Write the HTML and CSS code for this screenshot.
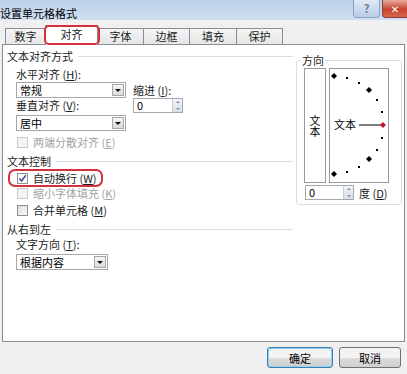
FILE: index.html
```html
<!DOCTYPE html>
<html lang="zh-CN">
<head>
    <meta charset="UTF-8">
    <title>设置单元格格式</title>
    <link rel="stylesheet" href="styles.css">
</head>
<body>
    <div class="titlebar">
        <span class="title">设置单元格格式</span>
        <div class="title-buttons">
            <span class="btn-help">?</span>
            <span class="btn-close">&#x2715;</span>
        </div>
    </div>

    <div class="tabs">
        <span class="tab w41">数字</span>
        <span class="tab tab-active w53">对齐</span>
        <span class="tab w47">字体</span>
        <span class="tab w47">边框</span>
        <span class="tab w48">填充</span>
        <span class="tab w47">保护</span>
    </div>

    <div class="panel">
        <div class="left-col">
            <div class="group-head">文本对齐方式</div>
            <div class="label">水平对齐 (<u>H</u>):</div>
            <div class="align-row">
                <div class="align-left">
                    <div class="combo"><span class="combo-text">常规</span><span class="combo-btn"></span></div>
                    <div class="label-inner">垂直对齐 (<u>V</u>):</div>
                    <div class="combo combo-gap"><span class="combo-text">居中</span><span class="combo-btn"></span></div>
                </div>
                <div class="align-right">
                    <div class="label-indent">缩进 (<u>I</u>):</div>
                    <div class="spin spin-indent"><span class="spin-text">0</span><span class="spin-btn"><i class="up"></i><i class="down"></i></span></div>
                </div>
            </div>
            <div class="check disabled mt4"><span class="box"></span>两端分散对齐 (<u>E</u>)</div>

            <div class="group-head mt5">文本控制</div>
            <div class="check mt3 marked">
                <span class="box checked">
                    <svg width="9" height="9" viewBox="0 0 9 9"><path d="M1.5 4.5 L3.6 7 L7.8 1.2" fill="none" stroke="#3d4f8a" stroke-width="1.6"/></svg>
                </span>自动换行 (<u>W</u>)
            </div>
            <div class="check disabled mt1"><span class="box"></span>缩小字体填充 (<u>K</u>)</div>
            <div class="check mt3"><span class="box"></span>合并单元格 (<u>M</u>)</div>

            <div class="group-head mt5">从右到左</div>
            <div class="label mt1">文字方向 (<u>T</u>):</div>
            <div class="combo combo-dir"><span class="combo-text">根据内容</span><span class="combo-btn"></span></div>
        </div>

        <fieldset class="orient">
            <legend>方向</legend>
            <div class="orient-row">
                <div class="vtext"><span class="vtext-inner">文本</span></div>
                <div class="dial">
                    <svg width="58" height="113" viewBox="0 0 58 113">
                        <g fill="#000">
                            <polygon points="4,4 7,7 4,10 1,7"/>
                            <rect x="16" y="8" width="2" height="2"/>
                            <rect x="28" y="13" width="2" height="2"/>
                            <polygon points="39,18 42,21 39,24 36,21"/>
                            <rect x="46" y="30" width="2" height="2"/>
                            <rect x="51" y="42" width="2" height="2"/>
                            <rect x="51" y="68" width="2" height="2"/>
                            <rect x="46" y="80" width="2" height="2"/>
                            <polygon points="39,87 42,90 39,93 36,90"/>
                            <rect x="28" y="97" width="2" height="2"/>
                            <rect x="16" y="102" width="2" height="2"/>
                            <polygon points="4,102 7,105 4,108 1,105"/>
                        </g>
                        <line x1="29" y1="56" x2="51" y2="56" stroke="#7f7f7f" stroke-width="2"/>
                        <polygon points="53,53 56,56 53,59 50,56" fill="#c0162b"/>
                        <text x="4" y="60" class="dial-text">文本</text>
                    </svg>
                </div>
            </div>
            <div class="degree-row">
                <div class="spin spin-degree"><span class="spin-text">0</span><span class="spin-btn"><i class="up"></i><i class="down"></i></span></div>
                <span class="degree-label">度 (<u>D</u>)</span>
            </div>
        </fieldset>
    </div>

    <div class="footer">
        <button class="dlg-btn btn-ok">确定</button>
        <button class="dlg-btn btn-cancel">取消</button>
    </div>
</body>
</html>
```

FILE: styles.css
```css
body {
    margin: 0;
    width: 407px;
    height: 374px;
    overflow: hidden;
    background: #f0f0f0;
    font-family: "Noto Sans CJK SC", "DejaVu Sans", sans-serif;
    font-size: 11px;
    line-height: 14px;
    color: #1b1b1b;
}

u {
    text-decoration: underline;
}

/* title bar */
.titlebar {
    height: 20px;
    display: flex;
    background: linear-gradient(#bcd1ea, #cfdff1);
}

.title {
    margin-top: 6px;
    margin-left: 0;
    color: #000;
}

.title-buttons {
    margin-left: auto;
    display: flex;
}

.btn-help {
    width: 27px;
    height: 18px;
    box-sizing: border-box;
    margin-right: 2px;
    border: 1px solid #8aa3c4;
    border-top: none;
    border-radius: 0 0 4px 4px;
    background: linear-gradient(#dfe9f5, #b9cde6);
    color: #6b7b8f;
    font-weight: bold;
    text-align: center;
    line-height: 16px;
}

.btn-close {
    width: 25px;
    height: 18px;
    box-sizing: border-box;
    border: 1px solid #8c3b35;
    border-top: none;
    border-right: none;
    border-radius: 0 0 0 4px;
    background: linear-gradient(#e9a99b, #c7432e 55%, #d7664f);
    color: #fff;
    font-size: 10px;
    font-weight: bold;
    text-align: center;
    line-height: 17px;
}

/* tabs */
.tabs {
    height: 24px;
    display: flex;
    align-items: flex-end;
    padding-left: 5px;
    box-sizing: border-box;
}

.tab {
    height: 16px;
    box-sizing: border-box;
    margin-right: -1px;
    border: 1px solid #898c95;
    border-bottom: none;
    background: linear-gradient(#f5f5f5, #e6e6e6);
    text-align: center;
    line-height: 15px;
}

.tab-active {
    position: relative;
    z-index: 2;
    height: 20px;
    margin-bottom: -1px;
    background: #fff;
    line-height: 17px;
}

.tab-active::after {
    content: "";
    position: absolute;
    left: -2px;
    right: -3px;
    top: -1px;
    bottom: 0;
    border: 2px solid #d6313a;
    border-radius: 5px;
}

.w41 { width: 41px; }
.w47 { width: 47px; }
.w48 { width: 48px; }
.w53 { width: 53px; }

/* main panel */
.panel {
    margin-left: 2px;
    width: 403px;
    height: 298px;
    box-sizing: border-box;
    border: 1px solid #898c95;
    background: #fff;
    display: flex;
    align-items: flex-start;
}

.left-col {
    width: 290px;
    padding-left: 4px;
    padding-top: 4px;
    box-sizing: border-box;
}

.group-head {
    display: flex;
    align-items: center;
}

.group-head::after {
    content: "";
    flex: 1;
    height: 1px;
    margin-left: 5px;
    background: #d5dfe5;
}

.label {
    margin-top: 4px;
    padding-left: 9px;
}

.label-inner {
    line-height: 14px;
}

.mt1 { margin-top: 1px; }
.mt3 { margin-top: 3px; }
.mt4 { margin-top: 4px; }
.mt5 { margin-top: 5px; }

.align-row {
    display: flex;
    margin-top: 1px;
    padding-left: 9px;
}

.align-left {
    width: 110px;
}

.align-right {
    margin-left: 7px;
}

.label-indent {
    margin-top: 1px;
}

/* combo boxes */
.combo {
    height: 16px;
    box-sizing: border-box;
    border: 1px solid #a4a8ae;
    display: flex;
    align-items: center;
    background: #fff;
}

.combo-gap {
    margin-top: 3px;
}

.combo-dir {
    width: 92px;
    margin-top: 3px;
    margin-left: 9px;
}

.combo-text {
    flex: 1;
    padding-left: 3px;
    color: #000;
}

.combo-btn {
    width: 12px;
    height: 12px;
    margin-right: 1px;
    box-sizing: border-box;
    border: 1px solid #a9a9a9;
    background: linear-gradient(#f6f6f6, #dadada);
    display: flex;
    align-items: center;
    justify-content: center;
}

.combo-btn::after {
    content: "";
    border-left: 3px solid transparent;
    border-right: 3px solid transparent;
    border-top: 3px solid #111;
}

/* spinners */
.spin {
    height: 15px;
    box-sizing: border-box;
    border: 1px solid #a4a8ae;
    display: flex;
    background: #fff;
}

.spin-indent {
    width: 50px;
    margin-top: 1px;
}

.spin-degree {
    width: 49px;
}

.spin-text {
    flex: 1;
    padding-left: 3px;
    line-height: 13px;
    color: #000;
}

.spin-btn {
    width: 9px;
    display: flex;
    flex-direction: column;
    background: linear-gradient(#f2f4f7, #d9dee5);
    border-left: 1px solid #c9ced6;
}

.spin-btn i {
    flex: 1;
    display: flex;
    align-items: center;
    justify-content: center;
}

.spin-btn .up::after {
    content: "";
    border-left: 2px solid transparent;
    border-right: 2px solid transparent;
    border-bottom: 2px solid #7f8fa5;
}

.spin-btn .down::after {
    content: "";
    border-left: 2px solid transparent;
    border-right: 2px solid transparent;
    border-top: 2px solid #7f8fa5;
}

/* check boxes */
.check {
    position: relative;
    display: flex;
    align-items: center;
    padding-left: 10px;
    color: #1b1b1b;
}

.check.disabled {
    color: #a3a3a3;
}

.box {
    width: 11px;
    height: 11px;
    box-sizing: border-box;
    margin-right: 5px;
    border: 1px solid #8e8f8f;
    background: linear-gradient(135deg, #dcdcdc, #fbfbfb);
    display: flex;
    align-items: center;
    justify-content: center;
}

.disabled .box {
    border-color: #c9c9c9;
    background: #f4f4f4;
}

.box.checked {
    background: #fff;
}

.marked {
    width: fit-content;
}

.marked::after {
    content: "";
    position: absolute;
    left: 1px;
    right: -6px;
    top: -2px;
    height: 18px;
    box-sizing: border-box;
    border: 2px solid #d6313a;
    border-radius: 7px;
}

/* orientation group */
.orient {
    margin: 8px 0 0 3px;
    padding: 0 0 4px 0;
    width: 106px;
    box-sizing: border-box;
    border: 1px solid #d5dfe5;
    border-radius: 3px;
}

.orient legend {
    margin-left: 4px;
    padding: 0 1px;
    line-height: 14px;
}

.orient-row {
    display: flex;
    margin: 1px 0 0 7px;
    gap: 2px;
}

.vtext {
    width: 22px;
    height: 115px;
    box-sizing: border-box;
    border: 1px solid #9a9a9a;
    display: flex;
    align-items: center;
    justify-content: center;
    color: #000;
}

.vtext-inner {
    writing-mode: vertical-rl;
    text-orientation: upright;
    line-height: 12px;
}

.dial {
    width: 60px;
    height: 115px;
    box-sizing: border-box;
    border: 1px solid #9a9a9a;
    margin-left: 1px;
}

.dial svg {
    display: block;
}

.dial-text {
    font-family: "Noto Sans CJK SC", sans-serif;
    font-size: 11px;
    fill: #000;
}

.degree-row {
    display: flex;
    align-items: center;
    margin: 2px 0 0 8px;
}

.degree-label {
    margin-left: 5px;
}

/* footer buttons */
.footer {
    display: flex;
    justify-content: flex-end;
    gap: 6px;
    padding-right: 6px;
    margin-top: 5px;
}

.dlg-btn {
    height: 21px;
    padding: 0;
    border: 1px solid #707070;
    border-radius: 3px;
    background: linear-gradient(#f3f3f3 50%, #dddddd 50%, #cfcfcf);
    font-family: "Noto Sans CJK SC", sans-serif;
    font-size: 11px;
    color: #000;
}

.btn-ok {
    width: 66px;
    border-color: #3c7fb1;
    box-shadow: inset 0 0 0 1px #8fd0f0;
}

.btn-cancel {
    width: 62px;
}
```
